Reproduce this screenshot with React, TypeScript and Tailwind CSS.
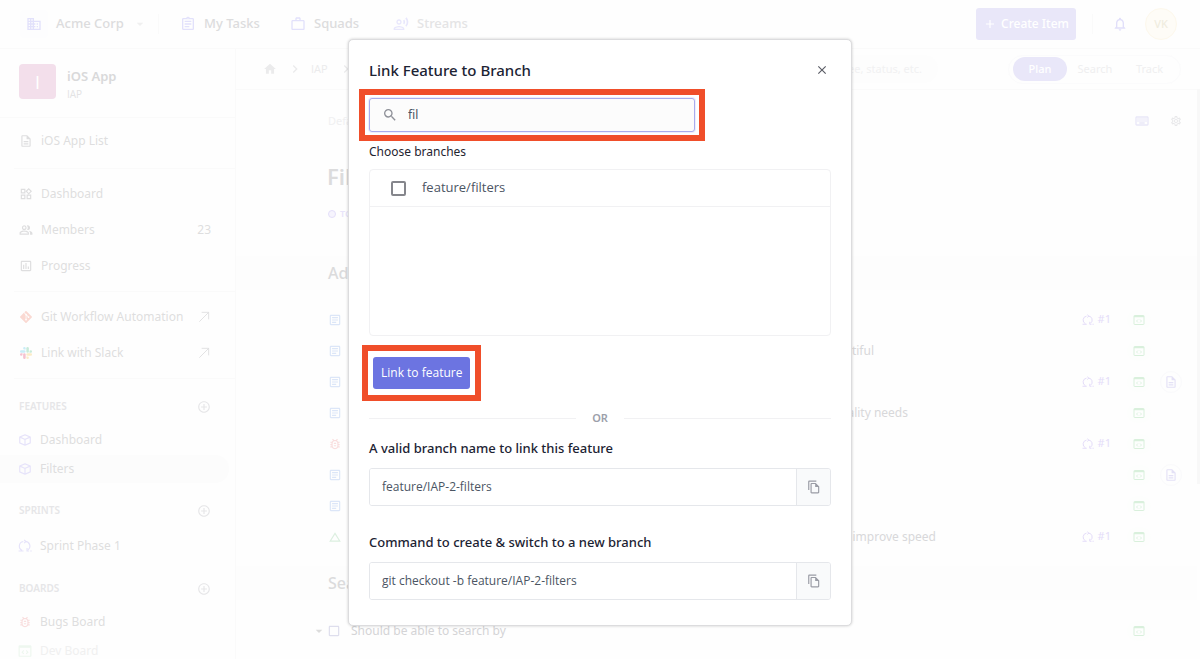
import { useState } from "react";
import type { ReactNode } from "react";
import {
  MdAdd,
  MdAddCircleOutline,
  MdArrowDropDown,
  MdCheckBoxOutlineBlank,
  MdChevronRight,
  MdClose,
  MdDomain,
  MdHome,
  MdNotificationsNone,
  MdOutlineArticle,
  MdOutlineAssessment,
  MdOutlineAssignment,
  MdOutlineBugReport,
  MdChangeHistory,
  MdOutlineDescription,
  MdOutlineFileCopy,
  MdOutlineKeyboard,
  MdOutlinePeopleAlt,
  MdOutlineRecordVoiceOver,
  MdOutlineSettings,
  MdOutlineWidgets,
  MdSearch,
  MdWorkOutline,
} from "react-icons/md";
import { BiCube } from "react-icons/bi";
import { SiGit } from "react-icons/si";

function SprintIcon({ className = "" }: { className?: string }) {
  return (
    <svg viewBox="0 0 24 24" fill="none" stroke="currentColor" strokeWidth="2" className={className} aria-hidden="true">
      <path d="M1 20.500h8.500M7 19.500A8 8 0 0 1 9 4.300M12 4a8 8 0 0 1 5 14.500" />
      <path d="M10.500 1.500 13.500 4.200 10.500 7M15.500 15.500v5h3.500M21 20.500h2.500" />
    </svg>
  );
}

function ArrowIcon() {
  return (
    <svg viewBox="0 0 24 24" fill="none" stroke="currentColor" strokeWidth="1.500" className="size-3.5" aria-hidden="true">
      <path d="M4 20 20 4M8 4h12v12" />
    </svg>
  );
}

function SlackIcon() {
  return (
    <svg viewBox="0 0 24 24" className="size-3" aria-hidden="true">
      <g fill="#c9edf8">
        <rect x="0" y="6.300" width="11" height="5" rx="2.500" />
        <path d="M6.300 2.500a2.500 2.500 0 0 1 5 0V5h-2.500a2.500 2.500 0 0 1-2.500-2.500z" />
      </g>
      <g fill="#c8ebda">
        <rect x="12.700" y="0" width="5" height="11.300" rx="2.500" />
        <path d="M19 8.800a2.500 2.500 0 1 1 2.500 2.500H19z" />
      </g>
      <g fill="#fbecc8">
        <rect x="12.700" y="12.700" width="11.300" height="5" rx="2.500" />
        <path d="M12.700 19h2.500a2.500 2.500 0 1 1-2.500 2.500z" />
      </g>
      <g fill="#f5c2d0">
        <rect x="6.300" y="12.700" width="5" height="11.300" rx="2.500" />
        <path d="M5 12.700v2.500a2.500 2.500 0 1 1-2.500-2.500z" />
      </g>
    </svg>
  );
}

function CodeWindowIcon({ className = "" }: { className?: string }) {
  return (
    <svg viewBox="0 0 24 24" fill="none" stroke="currentColor" className={className} aria-hidden="true">
      <rect x="2" y="3" width="20" height="18" rx="1" strokeWidth="2" />
      <path d="M2 5h20" strokeWidth="3" />
      <path d="M10 11l-3 3 3 3M14 11l3 3-3 3" strokeWidth="1.800" />
    </svg>
  );
}

function NavLink({ icon, label, end }: { icon: ReactNode; label: string; end?: ReactNode }) {
  return (
    <a href="#" className="flex h-9 items-center gap-2 pl-[19px] pr-6 text-[#dededf]">
      <span className="flex w-3.5 justify-center">{icon}</span>
      <span className="flex-1">{label}</span>
      {end}
    </a>
  );
}

function GroupTitle({ label }: { label: string }) {
  return (
    <div className="flex h-6 items-center justify-between pl-[19px] pr-6 text-[10px] font-semibold text-[#e6e6e8]">
      <h3>{label}</h3>
      <button type="button" aria-label={`Add to ${label.toLowerCase()}`}>
        <MdAddCircleOutline className="size-3.5" />
      </button>
    </div>
  );
}

type Kind = "story" | "bug" | "task";
type Item = { kind: Kind; text?: string; width?: string; sprint?: boolean; doc?: boolean };

const items: Item[] = [
  { kind: "story", sprint: true },
  { kind: "story", text: "Filter panel should look simple and beautiful", width: "w-[524px]" },
  { kind: "story", sprint: true, doc: true },
  { kind: "story", text: "Filter by accessibility and quality needs", width: "w-[558px]" },
  { kind: "bug", sprint: true },
  { kind: "story", doc: true },
  { kind: "story" },
  { kind: "task", text: "Cache the filter results to improve speed", width: "w-[586px]", sprint: true },
];

function KindIcon({ kind }: { kind: Kind }) {
  if (kind === "bug") return <MdOutlineBugReport className="size-3.5 text-[#f9dede]" />;
  if (kind === "task") return <MdChangeHistory className="size-3.5 text-[#dcefe0]" />;
  return <MdOutlineArticle className="size-3.5 text-[#dce6f8]" />;
}

function CodeBadge() {
  return (
    <span className="flex h-5 w-6 items-center justify-center rounded-full bg-[#fdfefd]">
      <CodeWindowIcon className="size-3 text-[#d9f0dc]" />
    </span>
  );
}

function ItemRow({ item }: { item: Item }) {
  return (
    <li className="flex h-[31px] items-center pl-[92px] pr-3.5">
      <KindIcon kind={item.kind} />
      <span className={`ml-2 whitespace-nowrap text-right text-[#d8d8da] ${item.width ?? ""}`}>{item.text}</span>
      <span className="ml-auto flex items-center gap-2">
        {item.sprint && (
          <span className="flex h-5 items-center gap-1 rounded-full px-2 text-[11px] text-[#e4dcf9]">
            <SprintIcon className="size-3" />
            #1
          </span>
        )}
        <CodeBadge />
        <span className="flex size-6 items-center justify-center">
          {item.doc && (
            <span className="flex size-[22px] items-center justify-center rounded-full border border-[#fafafc]">
              <MdOutlineDescription className="size-3.5 text-[#e4e1f6]" />
            </span>
          )}
        </span>
      </span>
    </li>
  );
}

function CopyField({ id, label, value }: { id: string; label: string; value: string }) {
  return (
    <div>
      <label htmlFor={id} className="block text-[13px] font-medium leading-5 text-[#1c2333]">
        {label}
      </label>
      <div className="mt-2.5 flex h-[38px] overflow-hidden rounded-[3px] border border-[#e5e7eb]">
        <input
          id={id}
          readOnly
          value={value}
          className="min-w-0 flex-1 bg-white px-3 font-['Open_Sans',sans-serif] text-xs text-[#4b5563] outline-none"
        />
        <button
          type="button"
          aria-label="Copy"
          className="flex w-[34px] items-center justify-center border-l border-[#e5e7eb] bg-[#f9fafb] text-[#9a9ca5]"
        >
          <MdOutlineFileCopy className="size-3.5" />
        </button>
      </div>
    </div>
  );
}

function LinkBranchDialog() {
  const [query, setQuery] = useState("fil");
  const [checked, setChecked] = useState(false);
  return (
    <div
      role="dialog"
      aria-labelledby="dialog-title"
      className="w-[504px] rounded-[5px] border border-[#dcdcde] bg-white px-5 pb-[25px] pt-5 shadow-[0_0_3px_rgba(0,0,0,0.2)]"
    >
      <div className="flex h-5 items-center justify-between">
        <h2 id="dialog-title" className="text-[15px] font-medium text-[#1c2333]">
          Link Feature to Branch
        </h2>
        <button type="button" aria-label="Close" className="mr-0.5 text-[#5b5d66]">
          <MdClose className="size-3.5" />
        </button>
      </div>

      <div className="relative mt-[18px] w-[326px]">
        <label className="flex h-[34px] items-center gap-2 rounded-[3px] border border-[#a9aced] bg-[#fcfcfc] pl-3 ring-1 ring-[#eeeefc]">
          <MdSearch className="size-4 text-[#8e9098]" />
          <input
            aria-label="Search branches"
            value={query}
            onChange={(e) => setQuery(e.target.value)}
            className="min-w-0 flex-1 bg-transparent pl-0.5 text-xs text-[#4b5563] outline-none"
          />
        </label>
        <div className="pointer-events-none absolute -inset-x-[10px] -inset-y-[9px] border-[6px] border-[#f04e2a]" />
      </div>

      <h3 className="mt-[10px] text-xs leading-5 text-[#1f2430]">Choose branches</h3>
      <div className="mt-[7px] h-[167px] rounded-sm border border-[#f1f1f3]">
        <label className="flex h-[37px] items-center gap-4 border-b border-[#f1f1f3] pl-[21px] font-['Open_Sans',sans-serif] text-[13px] text-[#4b5563]">
          <input
            type="checkbox"
            checked={checked}
            onChange={(e) => setChecked(e.target.checked)}
            className="size-[15px] appearance-none rounded-[2px] border-2 border-[#85868c] checked:bg-[#6c74e1]"
          />
          feature/filters
        </label>
      </div>

      <div className="relative ml-1 mt-[21px] w-fit">
        <button
          type="button"
          className="flex h-8 items-center rounded-[3px] bg-[#6c74e1] px-2 font-['Open_Sans',sans-serif] text-xs font-medium text-white"
        >
          Link to feature
        </button>
        <div className="pointer-events-none absolute -inset-x-[11px] -inset-y-3 border-[6px] border-[#f04e2a]" />
      </div>

      <div className="mt-[19px] flex h-5 items-center gap-4 text-[11px] font-semibold text-[#9ca0aa]">
        <span className="h-px flex-1 bg-[#f1f1f3]" />
        OR
        <span className="h-px flex-1 bg-[#f1f1f3]" />
      </div>

      <div className="mt-[10px] flex flex-col gap-[26px]">
        <CopyField id="branch-name" label="A valid branch name to link this feature" value="feature/IAP-2-filters" />
        <CopyField
          id="checkout-command"
          label="Command to create & switch to a new branch"
          value="git checkout -b feature/IAP-2-filters"
        />
      </div>
    </div>
  );
}

function TopBar() {
  return (
    <header className="flex h-[49px] shrink-0 items-center border-b border-[#fafafa] pl-5 pr-[23px] text-[13px] font-medium text-[#dcdcdd]">
      <span className="flex size-7 items-center justify-center rounded bg-[#fdfdfe]">
        <MdDomain className="size-4 text-[#e2e1fb]" />
      </span>
      <button type="button" className="ml-2 flex items-center gap-1">
        <span className="w-[72px] text-left">Acme Corp</span>
        <MdArrowDropDown className="size-4 text-[#f0f0f0]" />
      </button>
      <span className="ml-2.5 h-5 w-px bg-[#fafafa]" />
      <nav className="ml-[21px] flex items-center">
        <a href="#" className="flex w-[110px] items-center gap-2">
          <MdOutlineAssignment className="size-4 text-[#e2e1fb]" />
          My Tasks
        </a>
        <a href="#" className="flex w-[103px] items-center gap-2">
          <MdWorkOutline className="size-4 text-[#e2e1fb]" />
          Squads
        </a>
        <a href="#" className="flex items-center gap-2 text-[#e4e4e5]">
          <MdOutlineRecordVoiceOver className="size-4 text-[#e8e7fc]" />
          Streams
        </a>
      </nav>
      <button
        type="button"
        className="ml-auto flex h-8 w-[100px] items-center justify-center gap-1 rounded-[3px] bg-[#e9e7f9] text-xs text-white"
      >
        <MdAdd className="size-3.5" />
        Create Item
      </button>
      <span className="ml-4 h-5 w-px bg-[#fafafa]" />
      <button type="button" aria-label="Notifications" className="ml-[19px] text-[#e1dffa]">
        <MdNotificationsNone className="size-4" />
      </button>
      <span className="ml-[17px] flex size-8 items-center justify-center rounded-full border border-[#fdf8ec] bg-[#fefcf7] text-[11px] text-[#f0eddf]">
        VK
      </span>
    </header>
  );
}

function Sidebar() {
  return (
    <aside className="w-[236px] shrink-0 overflow-hidden border-r border-[#fafafa] bg-[#fefefe]">
      <div className="flex h-[69px] items-start gap-[11px] border-b border-[#fafafa] pl-[19px] pt-[15px]">
        <span className="flex h-[35px] w-[37px] items-center justify-center rounded bg-[#f3dfeb] font-['Open_Sans',sans-serif] text-lg font-medium text-white">
          I
        </span>
        <span className="flex flex-col">
          <span className="text-[13px] font-semibold leading-6 text-[#d9d9da]">iOS App</span>
          <span className="font-['Open_Sans',sans-serif] text-[10px] leading-3 text-[#e3e3e4]">IAP</span>
        </span>
      </div>
      <div className="ml-[14px] border-b border-[#fafafa] pb-[9px] pt-[5px]">
        <div className="-ml-[14px]">
          <NavLink icon={<MdOutlineDescription className="size-3.5" />} label="iOS App List" />
        </div>
      </div>
      <div className="ml-[14px] py-[7px]">
        <div className="-ml-[14px]">
          <NavLink icon={<MdOutlineWidgets className="size-3.5" />} label="Dashboard" />
          <NavLink icon={<MdOutlinePeopleAlt className="size-3.5" />} label="Members" end={<span>23</span>} />
          <NavLink icon={<MdOutlineAssessment className="size-3.5" />} label="Progress" />
        </div>
      </div>
      <div className="ml-[14px] border-y border-[#fafafa] py-[7px]">
        <div className="-ml-[14px]">
          <NavLink
            icon={<SiGit className="size-3 text-[#fad9d2]" />}
            label="Git Workflow Automation"
            end={<ArrowIcon />}
          />
          <NavLink icon={<SlackIcon />} label="Link with Slack" end={<ArrowIcon />} />
        </div>
      </div>
      <div className="pt-4">
        <GroupTitle label="FEATURES" />
        <div className="mt-1.5 text-[#dededf]">
          <a href="#" className="flex h-[30px] items-center gap-2 pl-[18px]">
            <BiCube className="size-3.5 text-[#e6e3fa]" />
            Dashboard
          </a>
          <a href="#" className="mr-1.5 flex h-[28px] items-center gap-2 rounded-r-full bg-[#fcfcfc] pl-[18px]">
            <BiCube className="size-3.5 text-[#e6e3fa]" />
            Filters
          </a>
        </div>
      </div>
      <div className="pt-4">
        <GroupTitle label="SPRINTS" />
        <a href="#" className="mt-2 flex h-[30px] items-center gap-2 pl-[18px] text-[#dededf]">
          <SprintIcon className="size-3.5 text-[#e6e3fa]" />
          Sprint Phase 1
        </a>
      </div>
      <div className="pt-4">
        <GroupTitle label="BOARDS" />
        <a href="#" className="mt-1.5 flex h-[29px] items-center gap-2 pl-[18px] text-[#dededf]">
          <MdOutlineBugReport className="size-3.5 text-[#f9dede]" />
          Bugs Board
        </a>
        <a href="#" className="flex h-[29px] items-center gap-2 pl-[18px] text-[#f0f0f0]">
          <CodeWindowIcon className="size-3.5 text-[#eef7ef]" />
          Dev Board
        </a>
      </div>
    </aside>
  );
}

function SectionTitle({ children }: { children: ReactNode }) {
  return (
    <h2 className="flex h-[34px] items-center bg-[#fdfdfd] pl-[92px] text-base font-medium text-[#dbdbdc]">{children}</h2>
  );
}

function Main() {
  return (
    <main className="min-w-0 flex-1 overflow-hidden">
      <div className="flex h-[41px] items-center border-b border-[#fafafa] pl-[27px] pr-4 text-[11px] text-[#ebebec]">
        <MdHome className="size-3.5" />
        <MdChevronRight className="ml-2.5 size-4" />
        <span className="ml-2 font-['Open_Sans',sans-serif]">IAP</span>
        <MdChevronRight className="ml-2.5 size-4" />
        <div className="ml-auto flex h-7 w-[300px] items-center justify-end rounded-full bg-[#fdfdfd] pr-4 text-[#f1f1f2]">
          Search by title, assignee, status, etc.
        </div>
        <div className="ml-[70px] flex h-[29px] w-[173px] items-center rounded-full border border-[#fbfbfc] pl-1">
          <button type="button" className="h-6 w-[54px] rounded-full bg-[#e9e7f9] font-medium text-white">
            Plan
          </button>
          <button type="button" className="w-14 text-[#efeff0]">Search</button>
          <button type="button" className="w-[53px] text-[#efeff0]">Track</button>
        </div>
      </div>
      <div className="flex h-[62px] items-center pl-[92px] pr-[15px] text-[11px] text-[#f0f0f1]">
        Default
        <MdOutlineKeyboard className="ml-auto size-4 text-[#e9e7f8]" />
        <MdOutlineSettings className="ml-5 size-3 text-[#e8e8ea]" />
      </div>
      <h1 className="h-[52px] pl-[91px] text-[22px] font-semibold leading-[48px] text-[#dcdcdd]">Filters</h1>
      <div className="flex h-[52px] items-start gap-1 pl-[92px] pt-0.5 text-[9px] font-semibold leading-4 text-[#e8e4fa]">
        <span className="mt-1 size-2 rounded-full border border-[#e4dffa] bg-[#f6f4fd]" />
        TO DO
      </div>
      <SectionTitle>Add filters</SectionTitle>
      <ul className="pb-[14px] pt-[14px]">
        {items.map((item, index) => (
          <ItemRow key={index} item={item} />
        ))}
      </ul>
      <SectionTitle>Search</SectionTitle>
      <div className="flex h-[61px] items-center pl-[75px] pr-3.5">
        <MdArrowDropDown className="size-4 text-[#dcdcdc]" />
        <MdCheckBoxOutlineBlank className="size-3.5 text-[#dedeed]" />
        <span className="ml-2.5 text-[#d4d4d6]">Should be able to search by</span>
        <span className="ml-auto mr-8">
          <CodeBadge />
        </span>
      </div>
      <div className="flex items-center gap-2 pl-[117px] text-[#d8d8da]">
        <MdOutlineFileCopy className="size-3.5 text-[#e2e2ea]" />
        issue creation
      </div>
    </main>
  );
}

export default function App() {
  return (
    <div className="relative flex h-screen flex-col overflow-hidden bg-[#fefefe] font-['Noto_Sans','Open_Sans',sans-serif] text-xs">
      <TopBar />
      <div className="flex min-h-0 flex-1">
        <Sidebar />
        <Main />
        <div className="mt-10 h-[395px] w-[3px] shrink-0 bg-[#f8f8f8]" />
      </div>
      <div className="absolute inset-0 flex items-start justify-center pt-[39px]">
        <LinkBranchDialog />
      </div>
    </div>
  );
}
